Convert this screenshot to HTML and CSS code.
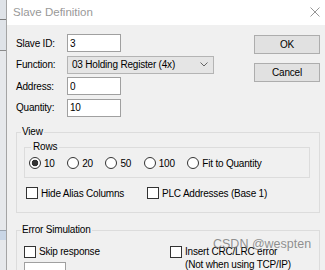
FILE: index.html
```html
<!DOCTYPE html>
<html lang="en">

<head>
    <meta charset="UTF-8" />
    <title>Slave Definition</title>
    <link rel="stylesheet" href="styles.css">
</head>

<body>
    <div class="screen">
        <div class="desk-strip"></div>

        <div class="dialog">
            <div class="titlebar">
                <span class="title">Slave Definition</span>
                <svg class="close" viewBox="0 0 10 10">
                    <path d="M0.5 0.5 L9.5 9.5 M9.5 0.5 L0.5 9.5" stroke="#8a8a8a" stroke-width="0.9" fill="none" />
                </svg>
            </div>

            <div class="body">
                <div class="top">
                    <div class="fields">
                        <label for="slave-id">Slave ID:</label>
                        <input class="text-field" type="text" id="slave-id" value="3" />

                        <label>Function:</label>
                        <div class="combo">
                            <span>03 Holding Register (4x)</span>
                            <svg class="chevron" viewBox="0 0 8 5">
                                <path d="M0.5 0.5 L4 4 L7.5 0.5" stroke="#555" stroke-width="0.9" fill="none" />
                            </svg>
                        </div>

                        <label for="address">Address:</label>
                        <input class="text-field" type="text" id="address" value="0" />

                        <label for="quantity">Quantity:</label>
                        <input class="text-field" type="text" id="quantity" value="10" />
                    </div>

                    <div class="buttons">
                        <button class="btn">OK</button>
                        <button class="btn">Cancel</button>
                    </div>
                </div>

                <fieldset class="group view">
                    <legend>View</legend>

                    <fieldset class="group rows">
                        <legend>Rows</legend>
                        <div class="radio-row">
                            <label class="option"><input class="radio" type="radio" name="rows" checked />10</label>
                            <label class="option"><input class="radio" type="radio" name="rows" />20</label>
                            <label class="option"><input class="radio" type="radio" name="rows" />50</label>
                            <label class="option"><input class="radio" type="radio" name="rows" />100</label>
                            <label class="option"><input class="radio" type="radio" name="rows" />Fit to Quantity</label>
                        </div>
                    </fieldset>

                    <div class="check-row">
                        <label class="option"><input class="box" type="checkbox" />Hide Alias Columns</label>
                        <label class="option"><input class="box" type="checkbox" />PLC Addresses (Base 1)</label>
                    </div>
                </fieldset>

                <fieldset class="group errors">
                    <legend>Error Simulation</legend>
                    <div class="error-grid">
                        <div>
                            <label class="error-item"><input class="box" type="checkbox" />Skip response</label>
                            <div class="small-field"></div>
                        </div>
                        <label class="error-item"><input class="box" type="checkbox" /><span>Insert CRC/LRC error<br>(Not when using TCP/IP)</span></label>
                    </div>
                </fieldset>
            </div>
        </div>

        <div class="watermark">CSDN @wespten</div>
    </div>
</body>

</html>
```

FILE: styles.css
```css
* {
    box-sizing: border-box;
}

body {
    margin: 0;
    font-family: "Liberation Sans", Arial, sans-serif;
    font-size: 10px;
    letter-spacing: -0.2px;
    color: #000;
    background: #f0f0f0;
}

.screen {
    position: relative;
    display: flex;
    height: 270px;
    overflow: hidden;
}

/* bit of the window behind the dialog */
.desk-strip {
    width: 7px;
    flex-shrink: 0;
    border-right: 1px solid #a4a4a4;
    background:
        linear-gradient(#dfe3e8 0 19px, #7c7c7c 19px 20px, #dfe3e8 20px 50px, #8a8a8a 50px 51px,
            #e6e8eb 51px 230px, #9aa4b0 230px 231px, #c9d6e6 231px 240px, #e6e8eb 240px);
}

.dialog {
    flex: 1;
    background: #f0f0f0;
}

.titlebar {
    height: 25px;
    background: #fff;
    display: flex;
    align-items: center;
    justify-content: space-between;
    padding: 0 5px 2px 6px;
}

.title {
    font-size: 11.5px;
    letter-spacing: 0;
    color: #999;
}

.close {
    width: 10px;
    height: 10px;
}

.body {
    padding: 9px 5px 0 9px;
}

.top {
    display: flex;
    justify-content: space-between;
}

.fields {
    display: grid;
    grid-template-columns: 51px auto;
    grid-auto-rows: 18px;
    row-gap: 3.5px;
    align-items: center;
}

.text-field {
    width: 54px;
    height: 18px;
    margin: 0;
    padding: 0 2px;
    border: 1px solid #a0a0a0;
    background: #fff;
    font: inherit;
    letter-spacing: inherit;
    color: #000;
}

.combo {
    width: 147px;
    height: 18px;
    display: flex;
    align-items: center;
    justify-content: space-between;
    padding: 0 5px 0 4px;
    border: 1px solid #b4b4b4;
    background: #e5e5e5;
}

.chevron {
    width: 8px;
    height: 5px;
}

.buttons {
    display: flex;
    flex-direction: column;
    gap: 9px;
    padding-top: 1px;
}

.btn {
    width: 66px;
    height: 19px;
    padding: 0;
    background: #e1e1e1;
    border: 1px solid #adadad;
    font: inherit;
    letter-spacing: inherit;
    color: #000;
}

.group {
    margin: 0;
    min-width: 0;
    border: 1px solid #dcdcdc;
}

.group legend {
    padding: 0 1px;
    margin-left: -3px;
    line-height: 12px;
}

.view {
    margin-top: 9.5px;
    padding: 3px 9px 12px 7px;
}

.rows {
    padding: 3px 0 7px 4px;
}

.rows legend {
    margin-left: 2px;
    padding: 0 2px;
}

.radio-row {
    display: flex;
    align-items: center;
    gap: 12.5px;
    height: 14px;
}

.option {
    display: flex;
    align-items: center;
    gap: 3px;
}

.radio {
    appearance: none;
    margin: 0;
    width: 12px;
    height: 12px;
    border: 1px solid #333;
    border-radius: 50%;
    background: #fff;
}

.radio:checked {
    background: radial-gradient(circle, #333 0 3px, #fff 3.6px);
}

.box {
    appearance: none;
    margin: 0;
    width: 12px;
    height: 12px;
    flex-shrink: 0;
    border: 1px solid #333;
    background: #fff;
}

.check-row {
    display: grid;
    grid-template-columns: 121px auto;
    align-items: center;
    height: 14px;
    margin-top: 8px;
    padding-left: 2px;
}

.errors {
    margin-top: 11px;
    padding: 9px 9px 0 7px;
}

.error-grid {
    display: grid;
    grid-template-columns: 146px auto;
}

.error-item {
    display: flex;
    align-items: flex-start;
    gap: 3px;
    line-height: 13px;
}

.error-item .box {
    margin-top: 1px;
}

.small-field {
    width: 42px;
    height: 18px;
    margin-top: 4px;
    border: 1px solid #a0a0a0;
    background: #fff;
}

.watermark {
    position: absolute;
    left: 213px;
    top: 237px;
    font-size: 12.5px;
    letter-spacing: 0;
    color: rgba(110, 110, 110, 0.75);
}
```
